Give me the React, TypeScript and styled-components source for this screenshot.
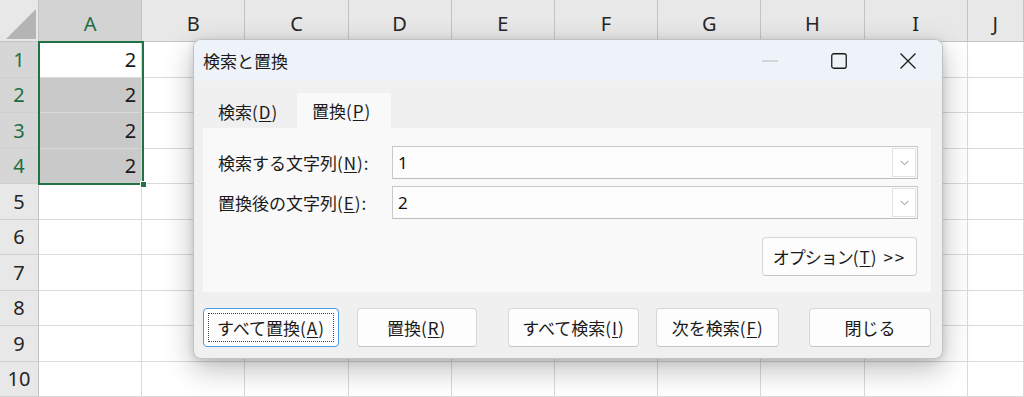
import React from 'react';
import styled, { createGlobalStyle } from 'styled-components';

const GlobalStyle = createGlobalStyle`
  html, body { margin: 0; padding: 0; background: #ffffff; overflow: hidden; }
  body { font-family: "Noto Sans", "Noto Sans CJK JP", sans-serif; }
  * { box-sizing: border-box; }
`;

const Page = styled.div`
  position: relative;
  width: 1024px;
  height: 397px;
  overflow: hidden;
  background: #ffffff;
`;

const Sheet = styled.div`
  display: grid;
  grid-template-columns: 39px repeat(9, 103.2px) 1fr;
  grid-template-rows: 42px repeat(10, 35.5px);
  width: 100%;
  height: 100%;
  font-family: "Noto Sans", sans-serif;
  font-size: 20px;
  color: #262626;
`;

const Corner = styled.div`
  position: relative;
  background: #e8e8e8;
  border-right: 1px solid #c4c4c4;
  border-bottom: 1px solid #c4c4c4;
`;

const CornerTriangle = styled.svg`
  position: absolute;
  right: 2px;
  bottom: 2px;
`;

const ColHeader = styled.div<{ $sel?: boolean }>`
  display: flex;
  align-items: center;
  justify-content: center;
  padding-top: 6px;
  background: ${(p) => (p.$sel ? '#d3d3d3' : '#e8e8e8')};
  color: ${(p) => (p.$sel ? '#1e6e42' : '#262626')};
  border-right: 1px solid #c4c4c4;
  border-bottom: 1px solid #c4c4c4;
`;

const RowHeader = styled.div<{ $sel?: boolean }>`
  display: flex;
  align-items: center;
  justify-content: center;
  background: ${(p) => (p.$sel ? '#d6d6d6' : '#e8e8e8')};
  color: ${(p) => (p.$sel ? '#1e6e42' : '#262626')};
  border-right: 1px solid #c4c4c4;
  border-bottom: 1px solid #d0d0d0;
`;

const Cell = styled.div<{ $shade?: boolean }>`
  position: relative;
  display: flex;
  align-items: center;
  justify-content: flex-end;
  padding-right: 5px;
  background: ${(p) => (p.$shade ? '#c9c9c9' : '#ffffff')};
  border-right: 1px solid #dadada;
  border-bottom: 1px solid #dadada;
  color: #1a1a1a;
`;

const Selection = styled.div`
  position: absolute;
  left: -1px;
  top: -1px;
  width: 106px;
  height: 144px;
  border: 2px solid #217346;
  z-index: 1;
  pointer-events: none;
`;

const FillHandle = styled.div`
  position: absolute;
  right: -5px;
  bottom: -5px;
  width: 7px;
  height: 7px;
  background: #217346;
  border: 1px solid #ffffff;
`;

/* ---------- Dialog ---------- */

const Dialog = styled.div`
  position: absolute;
  left: 193px;
  top: 39px;
  width: 750px;
  height: 320px;
  border: 1px solid #c2c2c2;
  border-radius: 8px;
  background: #f0f0f0;
  box-shadow: 0 10px 30px rgba(0, 0, 0, 0.26), 0 2px 8px rgba(0, 0, 0, 0.12);
  display: flex;
  flex-direction: column;
  overflow: hidden;
  z-index: 5;
  font-family: "Noto Sans CJK JP", "Noto Sans", sans-serif;
  font-size: 17px;
  color: #1b1b1b;
`;

const TitleBar = styled.div`
  flex: 0 0 41px;
  display: flex;
  align-items: center;
  background: #eef3f9;
  padding-left: 9px;
`;

const Title = styled.div`
  flex: 1;
  font-size: 17px;
  color: #1b1b1b;
`;

const WinButton = styled.div`
  width: 69px;
  height: 41px;
  display: flex;
  align-items: center;
  justify-content: center;
`;

const Body = styled.div`
  flex: 1;
  display: flex;
  flex-direction: column;
  padding: 12px 11px 11px 9px;
`;

const TabBar = styled.div`
  display: flex;
  align-items: flex-end;
  height: 35px;
`;

const Tab = styled.div<{ $active?: boolean }>`
  width: 94px;
  height: ${(p) => (p.$active ? '35px' : '34px')};
  display: flex;
  align-items: center;
  padding-left: 15px;
  background: ${(p) => (p.$active ? '#f9f9f9' : 'transparent')};
  color: #1b1b1b;
`;

const Panel = styled.div`
  height: 164px;
  background: #f9f9f9;
  padding: 18px 13px 0 15px;
  display: flex;
  flex-direction: column;
`;

const Form = styled.div`
  display: grid;
  grid-template-columns: 174px 1fr;
  grid-auto-rows: 33px;
  row-gap: 7px;
  align-items: center;
`;

const Label = styled.div`
  white-space: nowrap;
`;

const Paren = styled.span`
  letter-spacing: 1px;
`;

const Combo = styled.div`
  height: 33px;
  display: flex;
  align-items: center;
  background: #fdfdfd;
  border: 1px solid #c9c9c9;
  border-bottom-color: #bdbdbd;
  padding: 1px;
`;

const ComboValue = styled.div`
  flex: 1;
  padding-left: 4px;
  font-family: "Noto Sans", "Noto Sans CJK JP", sans-serif;
  font-size: 17px;
  color: #111;
`;

const DropButton = styled.div`
  width: 24px;
  height: 100%;
  display: flex;
  align-items: center;
  justify-content: center;
  background: #ffffff;
  border: 1px solid #e2e2e2;
`;

const OptionRow = styled.div`
  display: flex;
  justify-content: flex-end;
  margin-top: 18px;
  padding-right: 1px;
`;

const Button = styled.div<{ $w: number; $ml?: number; $focus?: boolean }>`
  width: ${(p) => p.$w}px;
  height: 39px;
  margin-left: ${(p) => p.$ml ?? 0}px;
  display: flex;
  align-items: center;
  justify-content: center;
  background: #fdfdfd;
  border: 1px solid ${(p) => (p.$focus ? '#4f9ae2' : '#d6d6d6')};
  border-bottom-color: ${(p) => (p.$focus ? '#4f9ae2' : '#c6c6c6')};
  border-radius: 4px;
  color: #1b1b1b;
  white-space: nowrap;
  outline: ${(p) => (p.$focus ? '1px dotted #444' : 'none')};
  outline-offset: -6px;
`;

const Katakana = styled.span`
  letter-spacing: -1px;
`;

const ButtonRow = styled.div`
  display: flex;
  margin-top: 16px;
`;

const Key = styled.span`
  text-decoration: underline;
  text-underline-offset: 2px;
  text-decoration-thickness: 1px;
`;

const Arrows = styled.span`
  margin-left: 6px;
  letter-spacing: 2px;
`;

const columns = ['A', 'B', 'C', 'D', 'E', 'F', 'G', 'H', 'I', 'J'];

const Chevron = () => (
  <svg width="9" height="6" viewBox="0 0 9 6">
    <path d="M0.5 0.8 L4.5 4.8 L8.5 0.8" fill="none" stroke="#8a8a8a" strokeWidth="1" />
  </svg>
);

const Mn = ({ k }: { k: string }) => (
  <Paren>
    (<Key>{k}</Key>)
  </Paren>
);

export default function App() {
  const rows = Array.from({ length: 10 }, (_, i) => i + 1);
  return (
    <Page>
      <GlobalStyle />
      <Sheet>
        <Corner>
          <CornerTriangle width="30" height="30" viewBox="0 0 30 30">
            <polygon points="30,0 30,30 0,30" fill="#b4b4b4" />
          </CornerTriangle>
        </Corner>
        {columns.map((c) => (
          <ColHeader key={c} $sel={c === 'A'}>
            {c}
          </ColHeader>
        ))}
        {rows.map((r) => (
          <React.Fragment key={r}>
            <RowHeader $sel={r <= 4}>{r}</RowHeader>
            {columns.map((c) => (
              <Cell key={c} $shade={c === 'A' && r >= 2 && r <= 4}>
                {c === 'A' && r <= 4 ? '2' : ''}
                {c === 'A' && r === 1 && (
                  <Selection>
                    <FillHandle />
                  </Selection>
                )}
              </Cell>
            ))}
          </React.Fragment>
        ))}
      </Sheet>

      <Dialog>
        <TitleBar>
          <Title>検索と置換</Title>
          <WinButton>
            <svg width="16" height="2" viewBox="0 0 16 2">
              <line x1="0" y1="1" x2="16" y2="1" stroke="#b8b8b8" strokeWidth="1" />
            </svg>
          </WinButton>
          <WinButton>
            <svg width="16" height="16" viewBox="0 0 16 16">
              <rect x="0.75" y="0.75" width="14.5" height="14.5" rx="2" fill="none" stroke="#1b1b1b" strokeWidth="1.3" />
            </svg>
          </WinButton>
          <WinButton>
            <svg width="16" height="16" viewBox="0 0 16 16">
              <path d="M0.5 0.5 L15.5 15.5 M15.5 0.5 L0.5 15.5" stroke="#1b1b1b" strokeWidth="1.3" />
            </svg>
          </WinButton>
        </TitleBar>
        <Body>
          <TabBar>
            <Tab>
              検索<Mn k="D" />
            </Tab>
            <Tab $active>
              置換<Mn k="P" />
            </Tab>
          </TabBar>
          <Panel>
            <Form>
              <Label>
                検索する文字列<Mn k="N" />:
              </Label>
              <Combo>
                <ComboValue>1</ComboValue>
                <DropButton>
                  <Chevron />
                </DropButton>
              </Combo>
              <Label>
                置換後の文字列<Mn k="E" />:
              </Label>
              <Combo>
                <ComboValue>2</ComboValue>
                <DropButton>
                  <Chevron />
                </DropButton>
              </Combo>
            </Form>
            <OptionRow>
              <Button $w={155}>
                <Katakana>オプション</Katakana>
                <Mn k="T" />
                <Arrows>&gt;&gt;</Arrows>
              </Button>
            </OptionRow>
          </Panel>
          <ButtonRow>
            <Button $w={136} $focus>
              すべて置換<Mn k="A" />
            </Button>
            <Button $w={120} $ml={18}>
              置換<Mn k="R" />
            </Button>
            <Button $w={132} $ml={31}>
              すべて検索<Mn k="I" />
            </Button>
            <Button $w={123} $ml={17}>
              次を検索<Mn k="F" />
            </Button>
            <Button $w={122} $ml={30}>
              閉じる
            </Button>
          </ButtonRow>
        </Body>
      </Dialog>
    </Page>
  );
}
